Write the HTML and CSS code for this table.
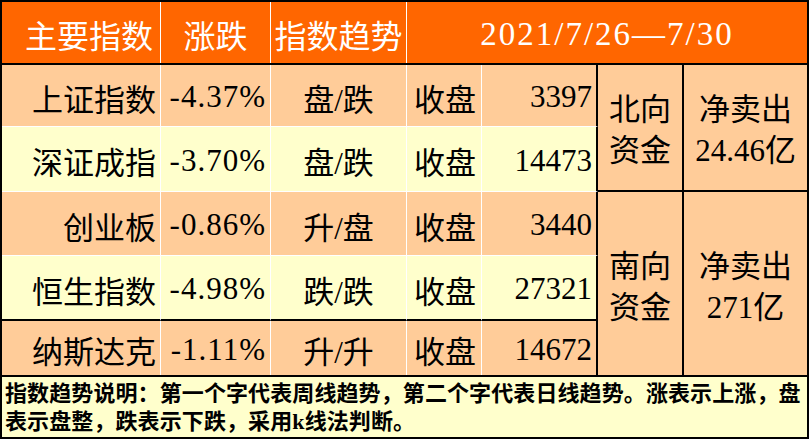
FILE: index.html
```html
<!DOCTYPE html>
<html lang="zh-CN">
<head>
<meta charset="utf-8">
<title>主要指数</title>
<link rel="stylesheet" href="styles.css">
</head>
<body>
<div class="sheet">
  <div class="grid head">
    <div class="h c-name">主要指数</div>
    <div class="h c-chg">涨跌</div>
    <div class="h c-trend">指数趋势</div>
    <div class="h c-date">2021/7/26—7/30</div>
  </div>
  <div class="grid body">
    <div class="cell peach name">上证指数</div>
    <div class="cell peach chg">-4.37%</div>
    <div class="cell peach trend">盘/跌</div>
    <div class="cell peach lbl">收盘</div>
    <div class="cell peach num">3397</div>
    <div class="panel peach north lab">北向<br>资金</div>
    <div class="panel peach north val">净卖出<br>24.46亿</div>

    <div class="cell yellow name">深证成指</div>
    <div class="cell yellow chg">-3.70%</div>
    <div class="cell yellow trend">盘/跌</div>
    <div class="cell yellow lbl">收盘</div>
    <div class="cell yellow num">14473</div>

    <div class="cell peach name">创业板</div>
    <div class="cell peach chg">-0.86%</div>
    <div class="cell peach trend">升/盘</div>
    <div class="cell peach lbl">收盘</div>
    <div class="cell peach num">3440</div>
    <div class="panel peach south lab">南向<br>资金</div>
    <div class="panel peach south val">净卖出<br>271亿</div>

    <div class="cell yellow name r4">恒生指数</div>
    <div class="cell yellow chg r4">-4.98%</div>
    <div class="cell yellow trend r4">跌/跌</div>
    <div class="cell yellow lbl r4">收盘</div>
    <div class="cell yellow num r4">27321</div>

    <div class="cell peach name r5">纳斯达克</div>
    <div class="cell peach chg r5">-1.11%</div>
    <div class="cell peach trend r5">升/升</div>
    <div class="cell peach lbl r5">收盘</div>
    <div class="cell peach num r5">14672</div>
  </div>
  <div class="note">指数趋势说明：第一个字代表周线趋势，第二个字代表日线趋势。涨表示上涨，盘<br>表示盘整，跌表示下跌，采用k线法判断。</div>
</div>
</body>
</html>
```
FILE: styles.css
```css
html, body {
  margin: 0;
  padding: 0;
  background: #ffffff;
}

.sheet {
  width: 809px;
  height: 439px;
  box-sizing: border-box;
  border: 2px solid #000;
  font-family: "Liberation Serif", "Noto Sans CJK SC", serif;
  color: #000;
  display: flex;
  flex-direction: column;
}

.grid {
  display: grid;
  grid-template-columns: 159px 110px 136px 75px 116px 86px 123px;
}

/* header */
.head {
  height: 63px;
  box-sizing: border-box;
  background: #ff6600;
  border-bottom: 2px solid #000;
}

.h {
  color: #fff;
  font-size: 32px;
  display: flex;
  align-items: center;
  justify-content: center;
  border-right: 1px solid #fff;
  padding-top: 3px;
  box-sizing: border-box;
}

.c-name { padding-left: 16px; }
.c-date {
  grid-column: 4 / 8;
  border-right: none;
  font-size: 33px;
  letter-spacing: 2px;
}

/* body */
.body {
  grid-template-rows: 62px 65px 64px 65px 54px;
  height: 310px;
}

.cell {
  font-size: 31px;
  display: flex;
  align-items: center;
  box-sizing: border-box;
  border-right: 1px solid #fff;
  border-bottom: 1px solid #fff;
  white-space: nowrap;
  padding-top: 3px;
}

.peach { background: #ffcc99; }
.yellow { background: #ffffcc; }

.name { justify-content: flex-end; padding-right: 4px; }
.chg { justify-content: flex-end; padding-right: 4px; letter-spacing: 1px; }
.trend { justify-content: center; }
.lbl { justify-content: center; padding-left: 2px; }
.num {
  justify-content: flex-end;
  padding-right: 4px;
  border-right: 2px solid #000;
}

.r4 { border-bottom: 2px solid #000; }
.r5 { border-bottom: none; }

.panel {
  font-size: 31px;
  line-height: 41px;
  display: flex;
  align-items: center;
  justify-content: center;
  text-align: center;
  box-sizing: border-box;
  padding-top: 4px;
}

.north { grid-row: 1 / 3; border-bottom: 2px solid #000; }
.south { grid-row: 3 / 6; padding-top: 6px; }
.lab { grid-column: 6; border-right: 2px solid #000; }
.val { grid-column: 7; }

/* note */
.note {
  flex: 1;
  background: #ffffcc;
  border-top: 2px solid #000;
  font-family: "Liberation Serif", "Noto Sans CJK SC", serif;
  font-size: 22px;
  font-weight: 700;
  letter-spacing: 0.1px;
  line-height: 28px;
  padding: 3px 0 0 3px;
  white-space: nowrap;
  overflow: hidden;
}
```
